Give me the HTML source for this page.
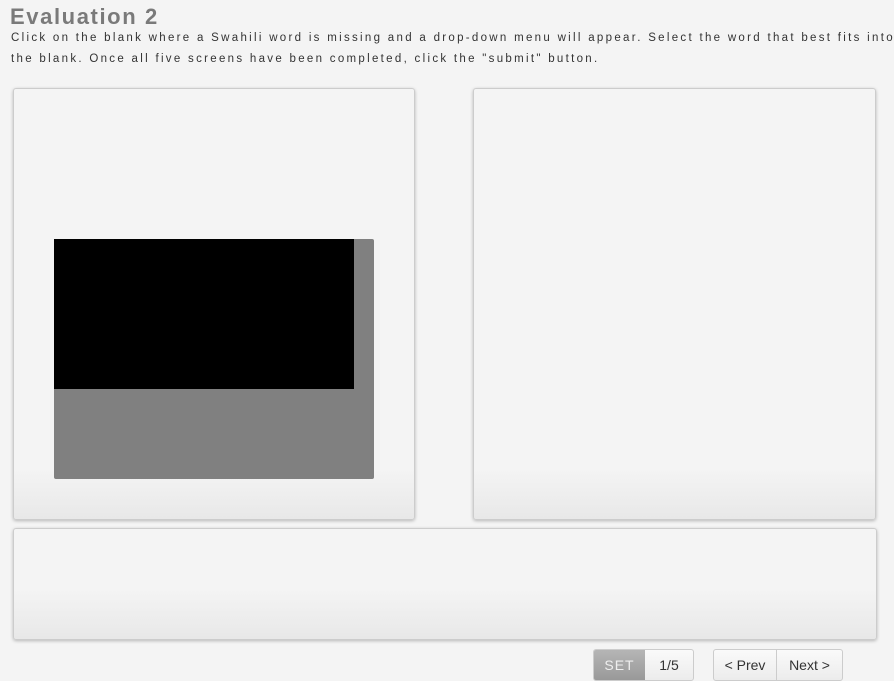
<!DOCTYPE html>
<html><head><style>
body{margin:0;width:894px;height:678px;overflow:hidden;background:#f4f4f4;font-family:"Liberation Sans",sans-serif;position:relative}
h1{position:absolute;left:10px;top:4px;margin:0;font-size:22px;font-weight:bold;color:#7a7a7a;letter-spacing:1.6px}
p{position:absolute;left:11px;top:28px;margin:0;font-size:11.5px;line-height:20.5px;color:#333;letter-spacing:2.3px;white-space:nowrap}
.panel{position:absolute;background:linear-gradient(#f4f4f4 0,#f4f4f4 calc(100% - 50px),#e8e8e8 100%);border:1px solid #ccc;border-radius:3px;box-shadow:0 1px 3px rgba(0,0,0,.25)}
.btn{position:absolute;top:649px;height:30px;border:1px solid #ccc;border-radius:3px;background:linear-gradient(#fafafa,#ececec);font-size:14px;color:#333;line-height:30px;overflow:hidden;display:flex}
.btn span{display:block;text-align:center}
</style></head><body>
<h1>Evaluation 2</h1>
<p>Click on the blank where a Swahili word is missing and a drop-down menu will appear. Select the word that best fits into<br>the blank. Once all five screens have been completed, click the "submit" button.</p>
<div class="panel" style="left:13px;top:88px;width:400px;height:430px"></div>
<div style="position:absolute;left:54px;top:239px;width:320px;height:240px;background:#808080;border-radius:2px"></div>
<div style="position:absolute;left:54px;top:239px;width:300px;height:150px;background:#000"></div>
<div class="panel" style="left:473px;top:88px;width:401px;height:430px"></div>
<div class="panel" style="left:13px;top:528px;width:862px;height:110px"></div>
<div class="btn" style="left:593px;width:99px"><span style="width:51px;background:linear-gradient(#b5b5b5,#999);color:#eee;letter-spacing:1px">SET</span><span style="width:48px">1/5</span></div>
<div class="btn" style="left:713px;width:128px"><span style="width:62px;border-right:1px solid #ccc">&lt; Prev</span><span style="width:65px">Next &gt;</span></div>
</body></html>
